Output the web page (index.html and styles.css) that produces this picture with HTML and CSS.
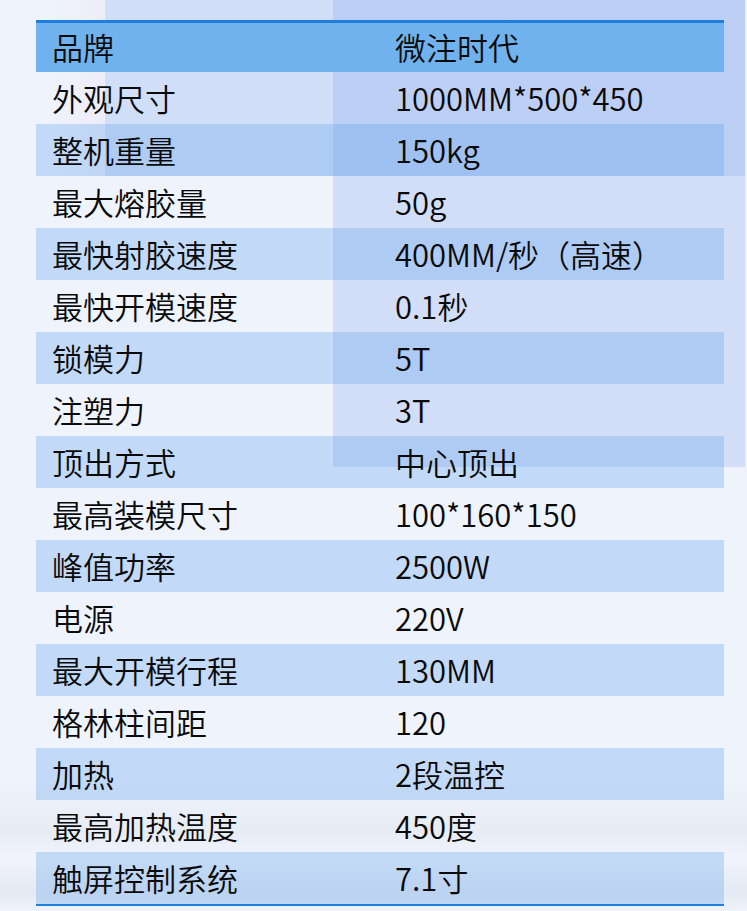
FILE: index.html
```html
<!DOCTYPE html>
<html lang="zh-CN">
<head>
<meta charset="utf-8">
<title>参数</title>
<link rel="stylesheet" href="styles.css">
</head>
<body>
<div class="page">
  <div class="spec">
    <div class="row head"><div class="k">品牌</div><div class="v">微注时代</div></div>
    <div class="row"><div class="k">外观尺寸</div><div class="v">1000MM*500*450</div></div>
    <div class="row alt"><div class="k">整机重量</div><div class="v">150kg</div></div>
    <div class="row"><div class="k">最大熔胶量</div><div class="v">50g</div></div>
    <div class="row alt"><div class="k">最快射胶速度</div><div class="v">400MM/秒（高速）</div></div>
    <div class="row"><div class="k">最快开模速度</div><div class="v">0.1秒</div></div>
    <div class="row alt"><div class="k">锁模力</div><div class="v">5T</div></div>
    <div class="row"><div class="k">注塑力</div><div class="v">3T</div></div>
    <div class="row alt"><div class="k">顶出方式</div><div class="v">中心顶出</div></div>
    <div class="row"><div class="k">最高装模尺寸</div><div class="v">100*160*150</div></div>
    <div class="row alt"><div class="k">峰值功率</div><div class="v">2500W</div></div>
    <div class="row"><div class="k">电源</div><div class="v">220V</div></div>
    <div class="row alt"><div class="k">最大开模行程</div><div class="v">130MM</div></div>
    <div class="row"><div class="k">格林柱间距</div><div class="v">120</div></div>
    <div class="row alt"><div class="k">加热</div><div class="v">2段温控</div></div>
    <div class="row"><div class="k">最高加热温度</div><div class="v">450度</div></div>
    <div class="row alt"><div class="k">触屏控制系统</div><div class="v">7.1寸</div></div>
  </div>
</div>
</body>
</html>
```

FILE: styles.css
```css
html, body {
  margin: 0;
  padding: 0;
}
body {
  width: 747px;
  height: 911px;
  overflow: hidden;
  font-family: "Noto Sans CJK SC", "Noto Sans", sans-serif;
  color: #0a0a0a;
  background:
    linear-gradient(rgba(125,160,235,0.25), rgba(125,160,235,0.25)) 333px 0 / 412px 467px no-repeat,
    linear-gradient(rgba(120,160,235,0.25), rgba(120,160,235,0.25)) 105px 0 / 640px 176px no-repeat,
    linear-gradient(90deg, rgba(230,225,245,0) 50px, rgba(234,230,247,0.5) 104px, rgba(232,226,246,0) 105px) 0 0 / 747px 176px no-repeat,
    linear-gradient(180deg, rgba(225,229,238,0) 0, rgba(225,229,238,0.55) 40%, rgba(245,247,251,0.3) 60%, rgba(222,226,236,0.6) 85%, rgba(240,243,250,0.3) 100%) 0 780px / 747px 131px no-repeat,
    #eff3fc;
}
.page {
  padding: 20px 23px 0 36px;
}
.spec {
  width: 688px;
  border-bottom: 2px solid #1f7fdf;
}
.row {
  display: grid;
  grid-template-columns: 359px 1fr;
  height: 52px;
  align-items: center;
  font-size: 31px;
  font-weight: 350;
  line-height: 1;
  box-sizing: border-box;
  padding-bottom: 2px;
}
.row .k {
  padding-left: 16px;
  white-space: nowrap;
}
.row .v {
  white-space: nowrap;
}
.head {
  background: #70b2ed;
  border-top: 3px solid #1f7fdf;
  padding-bottom: 3px;
}
.alt {
  background: rgba(100,165,235,0.32);
}
```
